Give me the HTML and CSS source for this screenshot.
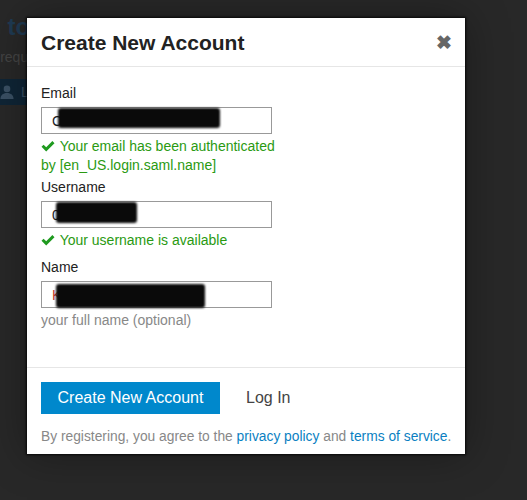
FILE: index.html
```html
<!DOCTYPE html>
<html lang="en">
<head>
    <meta charset="UTF-8">
    <meta name="viewport" content="width=device-width, initial-scale=1.0">
    <title>Create New Account</title>
    <link rel="stylesheet" href="styles.css">
</head>
<body>
    <div class="page">
        <h1 class="page-title">Welcome to</h1>
        <p class="page-note">Login required</p>
        <button class="page-btn">
            <svg width="14" height="14" viewBox="0 0 16 16"><circle cx="8" cy="4.5" r="3.8"/><path d="M0.5 16c0-4.5 3-7 7.5-7s7.5 2.5 7.5 7z"/></svg>
            <span>Log In</span>
        </button>
    </div>

    <div class="modal">
        <div class="modal-header">
            <h3>Create New Account</h3>
            <span class="close">&#10006;</span>
        </div>

        <div class="modal-body">
            <label>Email</label>
            <div class="field">
                <input type="text" value="C">
                <span class="redact redact-email"></span>
            </div>
            <div class="tip ok">
                <svg class="check" width="14" height="11" viewBox="0 0 14 11"><path d="M0.5 5.8 L2.6 3.7 L5.2 6.3 L11.4 0.1 L13.5 2.2 L5.2 10.5 Z"/></svg>
                Your email has been authenticated by [en_US.login.saml.name]
            </div>

            <label>Username</label>
            <div class="field">
                <input type="text" value="0">
                <span class="redact redact-user"></span>
            </div>
            <div class="tip ok">
                <svg class="check" width="14" height="11" viewBox="0 0 14 11"><path d="M0.5 5.8 L2.6 3.7 L5.2 6.3 L11.4 0.1 L13.5 2.2 L5.2 10.5 Z"/></svg>
                Your username is available
            </div>

            <label class="name-label">Name</label>
            <div class="field">
                <input type="text" class="red" value="K">
                <span class="redact redact-name"></span>
            </div>
            <div class="tip">your full name (optional)</div>
        </div>

        <div class="modal-footer">
            <div class="actions">
                <button class="btn-primary">Create New Account</button>
                <a class="login-link">Log In</a>
            </div>
            <p class="terms">By registering, you agree to the <a>privacy policy</a> and <a>terms of service</a>.</p>
        </div>
    </div>
</body>
</html>
```

FILE: styles.css
```css
body {
    margin: 0;
    height: 500px;
    overflow: hidden;
    font-family: "Liberation Sans", Arial, sans-serif;
    background: #282828;
    position: relative;
}

.page {
    padding-top: 13px;
    margin-left: -104px;
    white-space: nowrap;
}
.page-title {
    margin: 0;
    font-size: 24px;
    color: #1f3a52;
}
.page-note {
    margin: 8px 0 0 66px;
    font-size: 14px;
    color: #444;
}
.page-btn {
    margin-top: 14px;
    margin-left: 104px;
    height: 26px;
    border: none;
    background: #0f2536;
    color: #3a5064;
    font-family: inherit;
    font-size: 14px;
    display: flex;
    align-items: center;
    gap: 7px;
    padding: 0 8px 0 0;
}
.page-btn svg {
    fill: #3a5064;
}

.modal {
    position: absolute;
    top: 18px;
    left: 27px;
    width: 438px;
    background: #fff;
    box-shadow: 0 0 2px 1px rgba(0,0,0,0.8), 0 0 40px rgba(0,0,0,0.35);
}

.modal-header {
    height: 48px;
    border-bottom: 1px solid #e6e6e6;
    display: flex;
    align-items: center;
    justify-content: space-between;
    padding: 0 13px 0 14px;
}
.modal-header h3 {
    margin: 0;
    padding-top: 1px;
    font-size: 21px;
    color: #222;
}
.close {
    font-size: 19px;
    color: #666;
    font-weight: bold;
}

.modal-body {
    padding: 17px 14px 34px;
    font-size: 14px;
    line-height: 19px;
    color: #222;
}
.modal-body label {
    display: block;
    margin-bottom: 4px;
}
.modal-body .name-label {
    margin-top: 8px;
}
.field {
    position: relative;
    width: 231px;
}
.field input {
    box-sizing: border-box;
    width: 231px;
    height: 27px;
    border: 1px solid #999;
    padding: 0 10px;
    font-family: inherit;
    font-size: 14px;
    color: #222;
    outline: none;
}
.field input.red {
    color: #c0392b;
}
.redact {
    position: absolute;
    background: #0a0a0a;
    border-radius: 3px;
    filter: blur(1.2px);
}
.redact-email {
    left: 17px;
    top: 1px;
    width: 162px;
    height: 20px;
}
.redact-user {
    left: 15px;
    top: 1px;
    width: 81px;
    height: 21px;
}
.redact-name {
    left: 15px;
    top: 3px;
    width: 149px;
    height: 24px;
}

.tip {
    width: 236px;
    margin: 3px 0;
    color: #888;
}
.tip.ok {
    color: #2a9a12;
}
.check {
    fill: #1f9a1f;
    margin-right: 1px;
    vertical-align: -1px;
}

.modal-footer {
    border-top: 1px solid #e6e6e6;
    padding: 14px 8px 8px 14px;
}
.actions {
    display: flex;
    align-items: center;
    gap: 26px;
}
.btn-primary {
    height: 32px;
    width: 179px;
    border: none;
    background: #0088cc;
    color: #fff;
    font-family: inherit;
    font-size: 16px;
    padding: 0;
}
.login-link {
    font-size: 16px;
    color: #444;
}
.terms {
    margin: 13px 0 0;
    font-size: 13.8px;
    line-height: 19px;
    color: #888;
    white-space: nowrap;
}
.terms a {
    color: #0a7fc2;
}
```
